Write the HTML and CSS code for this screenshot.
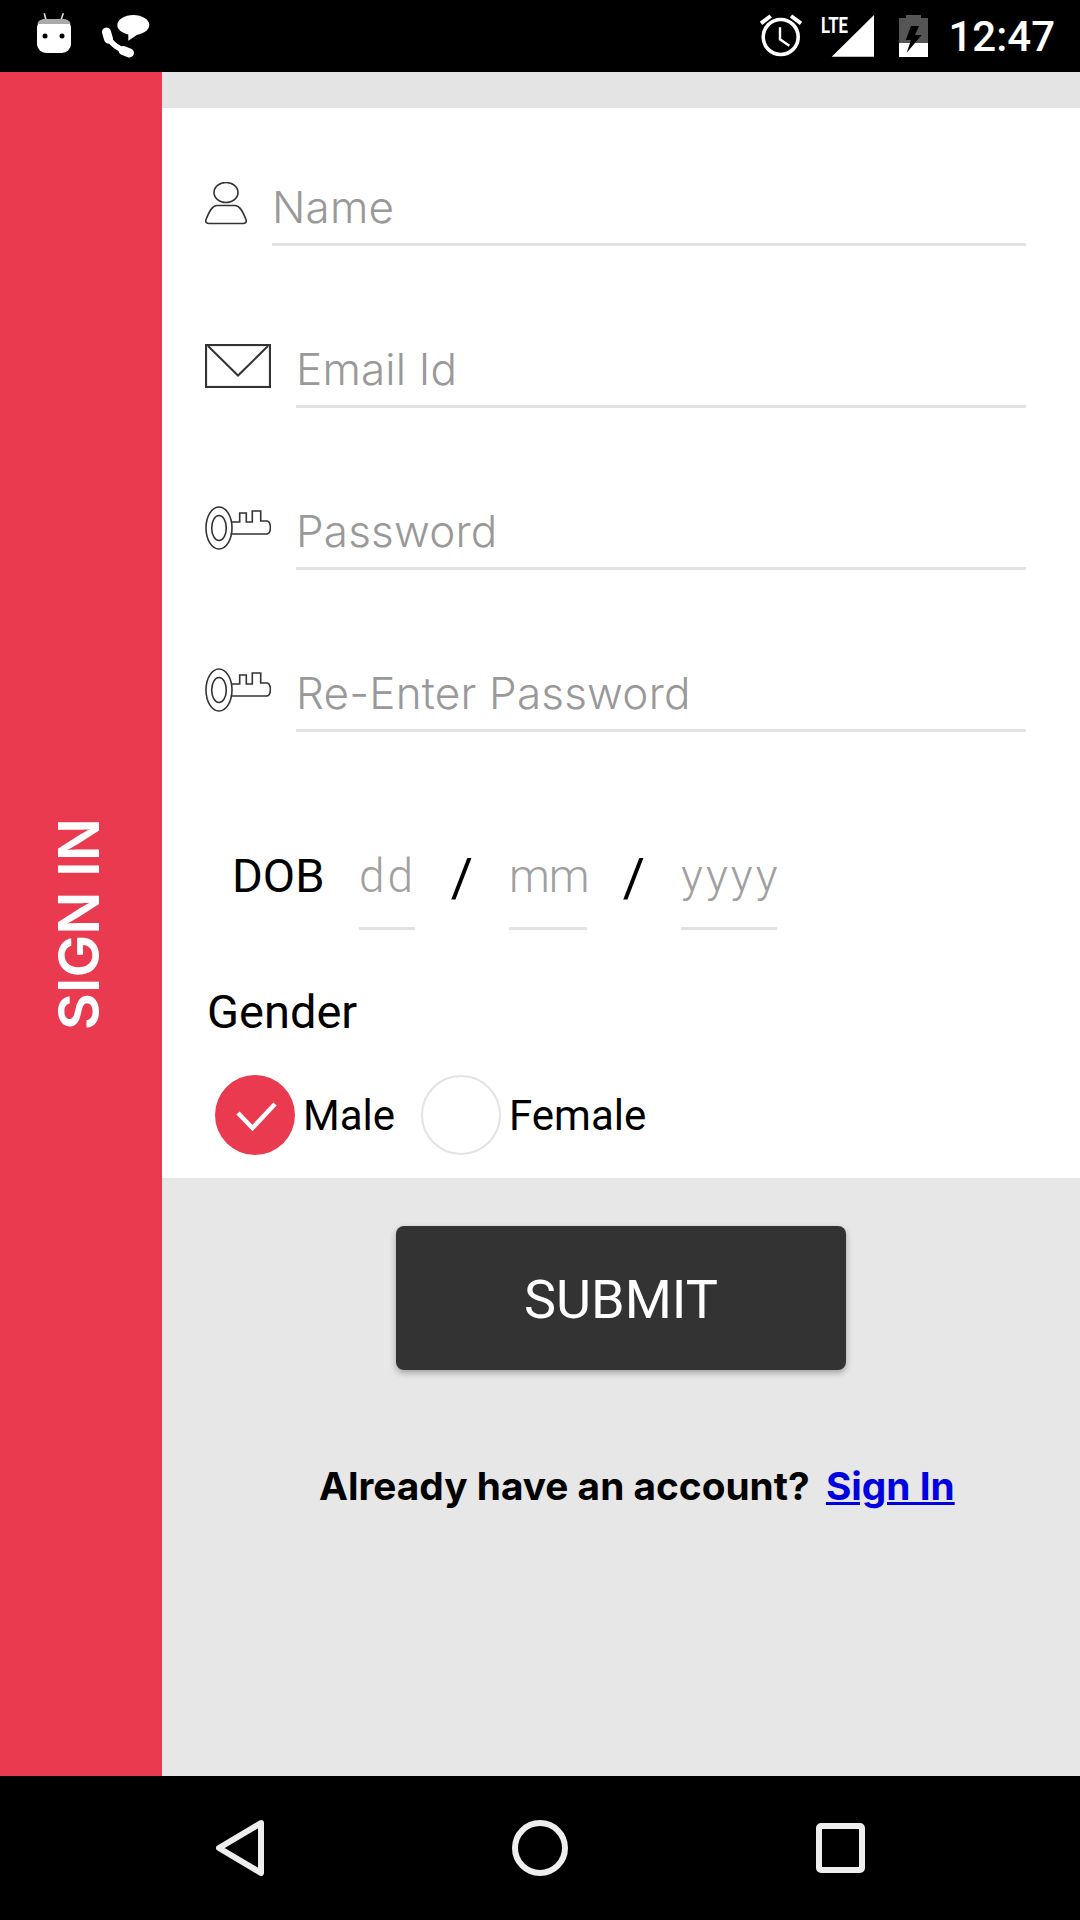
FILE: index.html
```html
<!DOCTYPE html>
<html lang="en">
  <head>
    <meta charset="UTF-8" />
    <meta name="viewport" content="width=device-width, initial-scale=1.0" />
    <title>Sign Up</title>
    <link rel="stylesheet" href="styles.css">
  </head>
  <body>
    <!-- Status bar -->
    <header class="status-bar">
      <svg class="icon-droid" width="40" height="42" viewBox="0 0 40 42">
        <path d="M10.3 1.3 12 8M29.3 1.3 27 8" stroke="#ddd" stroke-width="1.6" fill="none" />
        <rect x="3" y="7" width="34" height="34" rx="9" fill="#fff" />
        <path d="M3.5 12C4 8.5 7 7 12 7H28C33 7 36 8.5 36.5 12Z" fill="#aaa" />
        <circle cx="11" cy="24" r="2.5" fill="#000" />
        <circle cx="28" cy="24" r="2.5" fill="#000" />
      </svg>
      <svg class="icon-call" width="52" height="48" viewBox="0 0 52 48">
        <ellipse cx="33.3" cy="13" rx="16" ry="10" fill="#fff" />
        <path d="M28.3 20V28.7L38.3 22Z" fill="#fff" />
        <path d="M7 21Q9 33 26.7 39.7" stroke="#fff" stroke-width="5.5" fill="none" />
        <path d="M6.5 20 8.5 27M23 38.5 29.5 41" stroke="#fff" stroke-width="9" stroke-linecap="round" fill="none" />
      </svg>
      <div class="status-right">
        <svg class="icon-alarm" width="44" height="44" viewBox="0 0 44 44">
          <circle cx="20.7" cy="23" r="17.5" stroke="#fff" stroke-width="3.6" fill="none" />
          <path d="M1 9.3 10.7 2M31 2 41 9.3" stroke="#fff" stroke-width="4" fill="none" />
          <path d="M20 13.3V25.3L29.3 31.7" stroke="#fff" stroke-width="2.4" fill="none" />
        </svg>
        <svg class="icon-signal" width="55" height="44" viewBox="0 0 55 44">
          <path d="M11.7 42.7 54 1V42.7Z" fill="#fff" />
          <text class="lte" x="1" y="19" textLength="27" lengthAdjust="spacingAndGlyphs">LTE</text>
        </svg>
        <svg class="icon-battery" width="29" height="44" viewBox="0 0 29 44">
          <path d="M7 1H22V4H29V43H0V4H7Z" fill="#555" />
          <rect x="0" y="29" width="29" height="14" fill="#fff" />
          <path d="M12 12H20L16 21H22.7L7.7 38.7 12 26H6.7Z" fill="#000" />
        </svg>
        <span class="clock">12:47</span>
      </div>
    </header>

    <main class="screen">
      <aside class="sidebar"><span class="sidebar-title">SIGN IN</span></aside>

      <div class="content">
        <div class="top-strip"></div>

        <form class="signup-form">
          <div class="row">
            <svg class="icon" width="42" height="44" viewBox="0 0 42 44">
              <ellipse cx="21" cy="10.5" rx="12" ry="10" stroke="#333" stroke-width="1.6" fill="none" />
              <path d="M12 23.5H30C35 23.5 38 30 41 37.5 42 40.5 40 41.5 38 41.5H4C2 41.5 0 40.5 1 37.5 4 30 7 23.5 12 23.5Z" stroke="#333" stroke-width="1.6" fill="none" />
            </svg>
            <div class="field">Name</div>
          </div>
          <div class="row">
            <svg class="icon" width="66" height="44" viewBox="0 0 66 44">
              <rect x="1" y="1" width="64" height="42" stroke="#333" stroke-width="2.2" fill="none" />
              <path d="M3 2 33 31.5 63 2" stroke="#333" stroke-width="2" fill="none" />
            </svg>
            <div class="field">Email Id</div>
          </div>
          <div class="row">
            <svg class="icon" width="66" height="44" viewBox="0 0 66 44">
              <ellipse cx="14" cy="22" rx="13" ry="21" stroke="#333" stroke-width="1.6" fill="none" />
              <ellipse cx="14" cy="22" rx="7.3" ry="12.5" stroke="#333" stroke-width="1.6" fill="none" />
              <path d="M26.5 16H34.7V7H41.3V16H47.3V5H55.7V15H62C66.5 16 66.5 27 62 28H25.7" stroke="#333" stroke-width="1.6" fill="none" />
            </svg>
            <div class="field">Password</div>
          </div>
          <div class="row">
            <svg class="icon" width="66" height="44" viewBox="0 0 66 44">
              <ellipse cx="14" cy="22" rx="13" ry="21" stroke="#333" stroke-width="1.6" fill="none" />
              <ellipse cx="14" cy="22" rx="7.3" ry="12.5" stroke="#333" stroke-width="1.6" fill="none" />
              <path d="M26.5 16H34.7V7H41.3V16H47.3V5H55.7V15H62C66.5 16 66.5 27 62 28H25.7" stroke="#333" stroke-width="1.6" fill="none" />
            </svg>
            <div class="field">Re-Enter Password</div>
          </div>

          <div class="dob-row">
            <span class="dob-label">DOB</span>
            <span class="date-part date-dd">dd</span>
            <span class="slash">/</span>
            <span class="date-part date-mm">mm</span>
            <span class="slash">/</span>
            <span class="date-part date-yyyy">yyyy</span>
          </div>

          <div class="gender-label">Gender</div>
          <div class="gender-row">
            <span class="radio radio-on">
              <svg width="80" height="80" viewBox="0 0 80 80">
                <path d="M23 38 37.5 53 60 29" stroke="#fff" stroke-width="4.5" fill="none" />
              </svg>
            </span>
            <span class="radio-text male">Male</span>
            <span class="radio"></span>
            <span class="radio-text">Female</span>
          </div>
        </form>

        <div class="actions">
          <button class="submit" type="button">SUBMIT</button>
          <p class="account">Already have an account? <a href="#">Sign In</a></p>
        </div>
      </div>
    </main>

    <!-- Navigation bar -->
    <footer class="nav-bar">
      <svg width="48" height="56" viewBox="0 0 48 56">
        <path d="M45 3 3 28 45 53Z" stroke="#eee" stroke-width="6" stroke-linejoin="round" fill="none" />
      </svg>
      <svg width="56" height="56" viewBox="0 0 56 56">
        <circle cx="28" cy="28" r="25" stroke="#eee" stroke-width="6" fill="none" />
      </svg>
      <svg width="49" height="50" viewBox="0 0 49 50">
        <rect x="3" y="3" width="43" height="44" rx="2" stroke="#eee" stroke-width="6" fill="none" />
      </svg>
    </footer>
  </body>
</html>
```

FILE: styles.css
```css
* {
  box-sizing: border-box;
}
body {
  margin: 0;
  width: 1080px;
  height: 1920px;
  overflow: hidden;
  display: flex;
  flex-direction: column;
  font-family: Roboto, Arial, sans-serif;
  background-color: #000;
}
svg {
  display: block;
  flex-shrink: 0;
}

/* status bar */
.status-bar {
  height: 72px;
  flex-shrink: 0;
  display: flex;
  align-items: flex-start;
  background-color: #000;
  color: #fff;
}
.icon-droid {
  margin: 12px 0 0 34px;
}
.icon-call {
  margin: 12px 0 0 26px;
}
.status-right {
  margin-left: auto;
  display: flex;
  align-items: flex-start;
}
.icon-alarm,
.icon-signal,
.icon-battery {
  margin-top: 14px;
}
.icon-signal {
  margin-left: 16px;
}
.icon-battery {
  margin-left: 24px;
}
.lte {
  font-family: Roboto, Arial, sans-serif;
  font-size: 22px;
  font-weight: 700;
  fill: #fff;
}
.clock {
  margin: 13px 25px 0 20px;
  font-size: 42px;
  font-weight: 500;
  line-height: 48px;
}

/* main */
.screen {
  flex: 1;
  display: flex;
  min-height: 0;
}
.sidebar {
  width: 162px;
  flex-shrink: 0;
  display: flex;
  align-items: center;
  justify-content: center;
  padding-right: 5px;
  background-color: #ea3a50;
}
.sidebar-title {
  writing-mode: vertical-rl;
  transform: rotate(180deg);
  font-family: Inter, Arial, sans-serif;
  font-size: 57px;
  font-weight: 600;
  color: #fff;
}
.content {
  flex: 1;
  display: flex;
  flex-direction: column;
  background-color: #e7e7e7;
}
.top-strip {
  height: 36px;
  background-color: #e4e4e4;
}

/* form */
.signup-form {
  height: 1070px;
  padding: 76px 54px 0 43px;
  background-color: #fff;
}
.row {
  display: flex;
  gap: 25px;
  height: 62px;
  margin-bottom: 100px;
}
.icon {
  margin-top: -2px;
}
.field {
  flex: 1;
  height: 62px;
  border-bottom: 3px solid #e3e3e3;
  font-family: Inter, Arial, sans-serif;
  font-size: 44px;
  font-weight: 300;
  letter-spacing: 0.2px;
  line-height: 46px;
  color: #999;
}
.dob-row {
  display: flex;
  align-items: flex-start;
  margin: 114px 0 0 27px;
  height: 84px;
  font-size: 47px;
  line-height: 60px;
}
.dob-label {
  width: 127px;
  color: #000;
}
.date-part {
  height: 84px;
  border-bottom: 3px solid #e3e3e3;
  text-align: center;
  font-size: 46px;
  font-weight: 300;
  color: #a0a0a0;
}
.date-dd {
  width: 56px;
  letter-spacing: 3px;
}
.date-mm {
  width: 78px;
  letter-spacing: -1px;
}
.date-yyyy {
  width: 96px;
  letter-spacing: 3px;
}
.slash {
  width: 94px;
  margin-top: 2px;
  text-align: center;
  font-size: 54px;
  color: #000;
}
.gender-label {
  margin: 55px 0 0 2px;
  font-size: 47px;
  line-height: 54px;
  color: #000;
}
.gender-row {
  display: flex;
  align-items: center;
  margin: 36px 0 0 10px;
  font-size: 42px;
  line-height: 52px;
}
.radio {
  width: 80px;
  height: 80px;
  border: 2px solid #e3e3e3;
  border-radius: 50%;
  background-color: #fff;
}
.radio-on {
  border: none;
  background-color: #ea3a50;
}
.radio-text {
  margin-left: 8px;
  padding-top: 2px;
  color: #000;
}
.male {
  margin-right: 26px;
}

/* submit and link */
.actions {
  flex: 1;
  display: flex;
  flex-direction: column;
}
.submit {
  width: 450px;
  height: 144px;
  margin: 48px auto 0;
  padding-top: 4px;
  border: none;
  border-radius: 8px;
  background-color: #333;
  box-shadow: 0 3px 6px rgba(0, 0, 0, 0.3);
  font-family: Roboto, Arial, sans-serif;
  font-size: 54px;
  color: #fff;
}
.account {
  margin: 92px 0 0 157px;
  font-family: Inter, Arial, sans-serif;
  font-size: 38.8px;
  font-weight: 700;
  line-height: 48px;
  color: #000;
}
.account a {
  margin-left: 7px;
  color: #0000e0;
}

/* navigation bar */
.nav-bar {
  height: 144px;
  flex-shrink: 0;
  display: flex;
  align-items: center;
  gap: 248px;
  padding-left: 216px;
  background-color: #000;
}
```
